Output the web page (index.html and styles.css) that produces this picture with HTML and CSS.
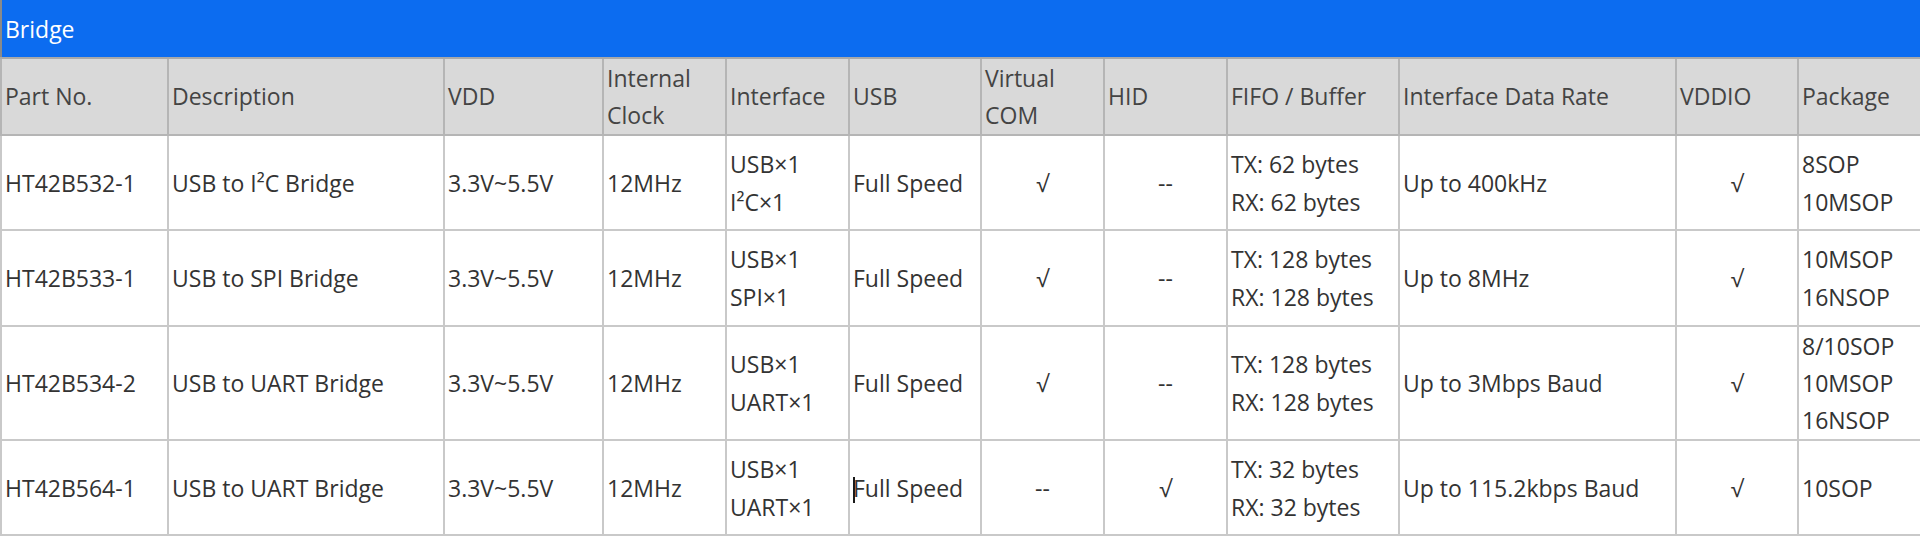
FILE: index.html
```html
<!DOCTYPE html>
<html lang="en">
<head>
<meta charset="utf-8">
<title>Bridge</title>
<link rel="stylesheet" href="styles.css">
</head>
<body>
<table class="spec">
  <colgroup>
    <col class="c-part"><col class="c-desc"><col class="c-vdd"><col class="c-clk">
    <col class="c-if"><col class="c-usb"><col class="c-com"><col class="c-hid">
    <col class="c-fifo"><col class="c-rate"><col class="c-io"><col class="c-pkg">
  </colgroup>
  <thead>
    <tr class="group"><th colspan="12">Bridge</th></tr>
    <tr class="head">
      <th>Part No.</th><th>Description</th><th>VDD</th><th>Internal<br>Clock</th>
      <th>Interface</th><th>USB</th><th>Virtual<br>COM</th><th>HID</th>
      <th>FIFO / Buffer</th><th>Interface Data Rate</th><th>VDDIO</th><th>Package</th>
    </tr>
  </thead>
  <tbody>
    <tr class="row">
      <td>HT42B532-1</td><td>USB to I²C Bridge</td><td>3.3V~5.5V</td><td>12MHz</td>
      <td>USB×1<br>I²C×1</td><td>Full Speed</td><td class="mid">√</td><td class="mid">--</td>
      <td>TX: 62 bytes<br>RX: 62 bytes</td><td>Up to 400kHz</td><td class="mid">√</td><td>8SOP<br>10MSOP</td>
    </tr>
    <tr class="row second">
      <td>HT42B533-1</td><td>USB to SPI Bridge</td><td>3.3V~5.5V</td><td>12MHz</td>
      <td>USB×1<br>SPI×1</td><td>Full Speed</td><td class="mid">√</td><td class="mid">--</td>
      <td>TX: 128 bytes<br>RX: 128 bytes</td><td>Up to 8MHz</td><td class="mid">√</td><td>10MSOP<br>16NSOP</td>
    </tr>
    <tr class="row tall">
      <td>HT42B534-2</td><td>USB to UART Bridge</td><td>3.3V~5.5V</td><td>12MHz</td>
      <td>USB×1<br>UART×1</td><td>Full Speed</td><td class="mid">√</td><td class="mid">--</td>
      <td>TX: 128 bytes<br>RX: 128 bytes</td><td>Up to 3Mbps Baud</td><td class="mid">√</td><td class="pkg3">8/10SOP<br>10MSOP<br>16NSOP</td>
    </tr>
    <tr class="row last">
      <td>HT42B564-1</td><td>USB to UART Bridge</td><td>3.3V~5.5V</td><td>12MHz</td>
      <td>USB×1<br>UART×1</td><td><span class="caret"></span>Full Speed</td><td class="mid">--</td><td class="mid">√</td>
      <td>TX: 32 bytes<br>RX: 32 bytes</td><td>Up to 115.2kbps Baud</td><td class="mid">√</td><td>10SOP</td>
    </tr>
  </tbody>
</table>
</body>
</html>
```

FILE: styles.css
```css
html, body {
  margin: 0;
  padding: 0;
  background: #ffffff;
}

.spec {
  width: 1920px;
  border-collapse: collapse;
  table-layout: fixed;
  font-family: "Open Sans", "Liberation Sans", sans-serif;
  font-size: 23px;
  line-height: 38px;
  color: #333333;
}

.c-part { width: 167px; }
.c-desc { width: 276px; }
.c-vdd  { width: 159px; }
.c-clk  { width: 123px; }
.c-if   { width: 123px; }
.c-usb  { width: 132px; }
.c-com  { width: 123px; }
.c-hid  { width: 123px; }
.c-fifo { width: 172px; }
.c-rate { width: 277px; }
.c-io   { width: 122px; }
.c-pkg  { width: 123px; }

.spec th,
.spec td {
  border: 2px solid #c9c9c9;
  padding: 0 3px;
  text-align: left;
  vertical-align: middle;
  font-weight: normal;
  white-space: nowrap;
}

.group th {
  background: #0c6cf0;
  color: #ffffff;
  height: 56px;
  border: 1px solid #0c6cf0;
  border-left: 2px solid #8a8a8a;
  border-bottom: 2px solid #a9a9a9;
  padding-left: 3px;
}

.head th {
  background: #d9d9d9;
  color: #444444;
  height: 75px;
  line-height: 37px;
  border-color: #b5b5b5;
}

.row td {
  height: 93px;
}

.row.second td {
  height: 94px;
}

.row.tall td {
  height: 112px;
}

.row.last td {
  height: 93px;
}

.spec td.pkg3 {
  line-height: 37px;
}

.spec td.mid {
  text-align: center;
}

.caret {
  display: inline-block;
  width: 2px;
  height: 26px;
  margin-right: -2px;
  background: #1a1a1a;
  vertical-align: -6px;
}
```
